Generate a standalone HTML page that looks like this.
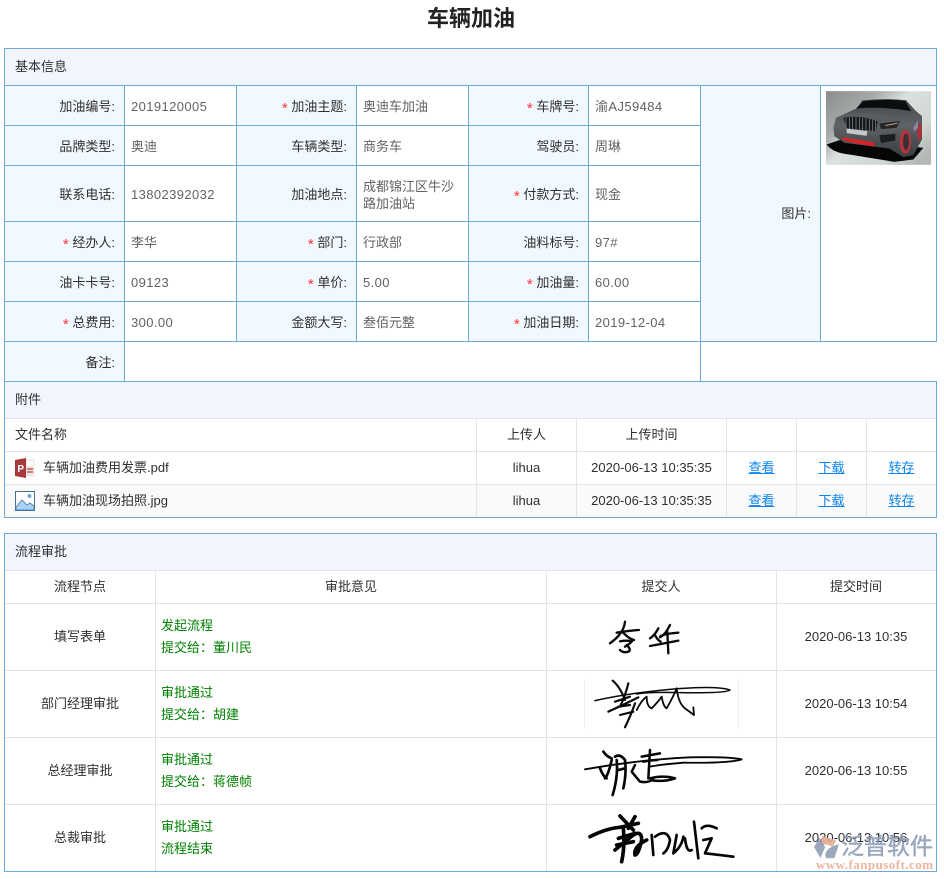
<!DOCTYPE html>
<html lang="zh"><head><meta charset="utf-8"><title>车辆加油</title>
<style>
html,body{margin:0;padding:0;background:#fff}
body{width:944px;height:879px;position:relative;overflow:hidden;font:13px/20px "Liberation Sans","Noto Sans CJK SC",sans-serif;color:#2f2f2f}
.b,.g,.f{position:absolute}
.b{background:#6ea9e0}.g{background:#e4e4e4}
.t{position:absolute;white-space:nowrap;height:20px;line-height:20px;margin-top:1px}
.l{right:829px}.l2{right:597px}.l3{right:365px}.l4{right:133px}
.v{color:#606266;letter-spacing:.4px}
.r{color:#f33;font-size:15px;position:relative;top:2px}
.c{transform:translateX(-50%)}
.gr{color:#008000;left:161px}
a{color:#0a84f0;text-decoration:underline}
svg{position:absolute;overflow:visible}
</style></head><body>
<div class="t" style="left:427px;top:4px;height:28px;line-height:28px;font-size:22px;font-weight:700;color:#222">车辆加油</div>

<!-- basic info fills -->
<div class="f" style="left:5px;top:49px;width:931px;height:36px;background:#f1f6fe"></div>
<div class="f" style="left:5px;top:86px;width:119px;height:295px;background:#f2f8ff"></div>
<div class="f" style="left:237px;top:86px;width:119px;height:255px;background:#f2f8ff"></div>
<div class="f" style="left:469px;top:86px;width:119px;height:255px;background:#f2f8ff"></div>
<div class="f" style="left:701px;top:86px;width:119px;height:255px;background:#f2f8ff"></div>
<!-- basic lines -->
<div class="b" style="left:4px;top:48px;width:933px;height:1px"></div>
<div class="b" style="left:4px;top:85px;width:933px;height:1px"></div>
<div class="b" style="left:4px;top:125px;width:697px;height:1px"></div>
<div class="b" style="left:4px;top:165px;width:697px;height:1px"></div>
<div class="b" style="left:4px;top:221px;width:697px;height:1px"></div>
<div class="b" style="left:4px;top:261px;width:697px;height:1px"></div>
<div class="b" style="left:4px;top:301px;width:697px;height:1px"></div>
<div class="b" style="left:4px;top:341px;width:933px;height:1px"></div>
<div class="b" style="left:4px;top:381px;width:933px;height:1px"></div>
<div class="b" style="left:4px;top:48px;width:1px;height:470px"></div>
<div class="b" style="left:936px;top:48px;width:1px;height:294px"></div>
<div class="b" style="left:936px;top:381px;width:1px;height:137px"></div>
<div class="b" style="left:124px;top:85px;width:1px;height:296px"></div>
<div class="b" style="left:236px;top:85px;width:1px;height:257px"></div>
<div class="b" style="left:356px;top:85px;width:1px;height:257px"></div>
<div class="b" style="left:468px;top:85px;width:1px;height:257px"></div>
<div class="b" style="left:588px;top:85px;width:1px;height:257px"></div>
<div class="b" style="left:700px;top:85px;width:1px;height:296px"></div>
<div class="b" style="left:820px;top:85px;width:1px;height:257px"></div>

<div class="t" style="left:15px;top:56px">基本信息</div>

<div class="t l" style="top:96px">加油编号:</div><div class="t v" style="left:131px;top:96px">2019120005</div>
<div class="t l2" style="top:96px"><span class="r">*</span> 加油主题:</div><div class="t v" style="left:363px;top:96px;letter-spacing:0">奥迪车加油</div>
<div class="t l3" style="top:96px"><span class="r">*</span> 车牌号:</div><div class="t v" style="left:595px;top:96px">渝AJ59484</div>
<div class="t l" style="top:136px">品牌类型:</div><div class="t v" style="left:131px;top:136px;letter-spacing:0">奥迪</div>
<div class="t l2" style="top:136px">车辆类型:</div><div class="t v" style="left:363px;top:136px;letter-spacing:0">商务车</div>
<div class="t l3" style="top:136px">驾驶员:</div><div class="t v" style="left:595px;top:136px;letter-spacing:0">周琳</div>
<div class="t l" style="top:184px">联系电话:</div><div class="t v" style="left:131px;top:184px">13802392032</div>
<div class="t l2" style="top:184px">加油地点:</div>
<div class="t v" style="left:363px;top:176px;letter-spacing:0">成都锦江区牛沙</div><div class="t v" style="left:363px;top:193px;letter-spacing:0">路加油站</div>
<div class="t l3" style="top:184px"><span class="r">*</span> 付款方式:</div><div class="t v" style="left:595px;top:184px;letter-spacing:0">现金</div>
<div class="t l" style="top:232px"><span class="r">*</span> 经办人:</div><div class="t v" style="left:131px;top:232px;letter-spacing:0">李华</div>
<div class="t l2" style="top:232px"><span class="r">*</span> 部门:</div><div class="t v" style="left:363px;top:232px;letter-spacing:0">行政部</div>
<div class="t l3" style="top:232px">油料标号:</div><div class="t v" style="left:595px;top:232px">97#</div>
<div class="t l" style="top:272px">油卡卡号:</div><div class="t v" style="left:131px;top:272px">09123</div>
<div class="t l2" style="top:272px"><span class="r">*</span> 单价:</div><div class="t v" style="left:363px;top:272px">5.00</div>
<div class="t l3" style="top:272px"><span class="r">*</span> 加油量:</div><div class="t v" style="left:595px;top:272px">60.00</div>
<div class="t l" style="top:312px"><span class="r">*</span> 总费用:</div><div class="t v" style="left:131px;top:312px">300.00</div>
<div class="t l2" style="top:312px">金额大写:</div><div class="t v" style="left:363px;top:312px;letter-spacing:0">叁佰元整</div>
<div class="t l3" style="top:312px"><span class="r">*</span> 加油日期:</div><div class="t v" style="left:595px;top:312px">2019-12-04</div>
<div class="t l" style="top:352px">备注:</div>
<div class="t l4" style="top:203px">图片:</div>

<!-- car -->
<svg style="left:826px;top:91px" width="105" height="74" viewBox="0 0 315 221">
<defs>
<linearGradient id="bg" x1="0" y1="0" x2="1" y2=".8"><stop offset="0" stop-color="#8a8d8c"/><stop offset=".3" stop-color="#a5a9a7"/><stop offset=".5" stop-color="#dbe2de"/><stop offset=".8" stop-color="#d0d6d2"/><stop offset="1" stop-color="#b4b9b6"/></linearGradient>
<linearGradient id="bd" x1="0" y1="0" x2="0" y2="1"><stop offset="0" stop-color="#43474b"/><stop offset=".45" stop-color="#5e6368"/><stop offset="1" stop-color="#3a3d41"/></linearGradient>
</defs>
<rect width="315" height="221" fill="url(#bg)"/>
<path d="M2 160Q20 185 70 190L205 212L262 205L292 170L60 140Z" fill="#060606"/>
<path d="M22 110L30 80L95 50L108 28Q170 20 240 27L268 58L288 75V145L262 192L232 198L190 172L55 155L25 135Z" fill="url(#bd)"/>
<path d="M90 52L112 30Q175 22 238 30L255 60Q170 45 90 52Z" fill="#0c0d0f"/>
<path d="M40 75Q100 58 160 70L240 85L158 92Q100 72 50 85Z" fill="#585d62"/>
<path d="M52 80Q100 70 155 90L150 120L62 112Z" fill="#17181b"/>
<path d="M60 80V112M70 78V113M80 77V114M90 77V115M100 78V116M110 80V117M120 81V118M130 83V119M140 85V120M149 87V120" stroke="#8a8f93" stroke-width="2"/>
<path d="M62 112L124 120L122 134L62 126Z" fill="#c4c7c9"/>
<path d="M47 138Q100 145 148 155L142 166Q90 158 52 148Z" fill="#d3262a"/>
<path d="M160 97L222 90L212 110L165 114Z" fill="#232528"/>
<path d="M178 103L215 96" stroke="#c99e6c" stroke-width="3"/>
<path d="M160 132L208 128V148L165 156Z" fill="#1b1d20"/>
<ellipse cx="238" cy="152" rx="17" ry="36" fill="#b5333c"/>
<ellipse cx="240" cy="152" rx="9" ry="25" fill="#3a3034"/>
<ellipse cx="280" cy="122" rx="7" ry="26" fill="#a93039"/>
<path d="M262 108L276 88V110L264 122Z" fill="#8b85a8"/>
</svg>

<!-- attachments -->
<div class="f" style="left:5px;top:382px;width:931px;height:36px;background:#f1f6fe"></div>
<div class="f" style="left:5px;top:485px;width:931px;height:32px;background:#fafafa"></div>
<div class="g" style="left:5px;top:418px;width:931px;height:1px"></div>
<div class="g" style="left:5px;top:451px;width:931px;height:1px"></div>
<div class="g" style="left:5px;top:484px;width:931px;height:1px"></div>
<div class="g" style="left:476px;top:419px;width:1px;height:98px"></div>
<div class="g" style="left:576px;top:419px;width:1px;height:98px"></div>
<div class="g" style="left:726px;top:419px;width:1px;height:98px"></div>
<div class="g" style="left:796px;top:419px;width:1px;height:98px"></div>
<div class="g" style="left:866px;top:419px;width:1px;height:98px"></div>
<div class="b" style="left:4px;top:517px;width:933px;height:1px"></div>

<div class="t" style="left:15px;top:389px">附件</div>
<div class="t" style="left:15px;top:424px">文件名称</div>
<div class="t c" style="left:526.5px;top:424px">上传人</div>
<div class="t c" style="left:651.5px;top:424px">上传时间</div>
<svg style="left:15px;top:458px" width="20" height="20" viewBox="0 0 20 20">
<path d="M7 1.5H19.5V18.5H7Z" fill="#f1e4e4"/><path d="M12 3H18V8H12Z" fill="#fff"/><path d="M12 10H18V12H12ZM12 13H18V15H12Z" fill="#c8807f"/>
<path d="M0 2L11 0V20L0 18Z" fill="#a8383b"/>
<text x="2.4" y="14" font-family="Liberation Sans" font-size="10" font-weight="700" fill="#fff">P</text>
</svg>
<div class="t" style="left:43px;top:457px">车辆加油费用发票.pdf</div>
<div class="t c" style="left:526.5px;top:457px">lihua</div>
<div class="t c" style="left:651.5px;top:457px">2020-06-13 10:35:35</div>
<div class="t c" style="left:761.5px;top:457px"><a>查看</a></div>
<div class="t c" style="left:831.5px;top:457px"><a>下载</a></div>
<div class="t c" style="left:901.5px;top:457px"><a>转存</a></div>
<svg style="left:15px;top:491px" width="20" height="20" viewBox="0 0 20 20">
<rect x=".5" y=".5" width="19" height="19" fill="#fff" stroke="#47729f"/>
<path d="M1 16L7 9L12 14L15 12L19 15V19H1Z" fill="#a7d3f8" stroke="#47729f" stroke-width=".8"/>
<circle cx="14.5" cy="5" r="2" fill="#7fa8cf"/>
</svg>
<div class="t" style="left:43px;top:490px">车辆加油现场拍照.jpg</div>
<div class="t c" style="left:526.5px;top:490px">lihua</div>
<div class="t c" style="left:651.5px;top:490px">2020-06-13 10:35:35</div>
<div class="t c" style="left:761.5px;top:490px"><a>查看</a></div>
<div class="t c" style="left:831.5px;top:490px"><a>下载</a></div>
<div class="t c" style="left:901.5px;top:490px"><a>转存</a></div>

<!-- flow -->
<div class="f" style="left:5px;top:534px;width:931px;height:36px;background:#f1f6fe"></div>
<div class="b" style="left:4px;top:533px;width:933px;height:1px"></div>
<div class="b" style="left:4px;top:871px;width:933px;height:1px"></div>
<div class="b" style="left:4px;top:533px;width:1px;height:339px"></div>
<div class="b" style="left:936px;top:533px;width:1px;height:339px"></div>
<div class="g" style="left:5px;top:570px;width:931px;height:1px"></div>
<div class="g" style="left:5px;top:603px;width:931px;height:1px"></div>
<div class="g" style="left:5px;top:670px;width:931px;height:1px"></div>
<div class="g" style="left:5px;top:737px;width:931px;height:1px"></div>
<div class="g" style="left:5px;top:804px;width:931px;height:1px"></div>
<div class="g" style="left:155px;top:571px;width:1px;height:300px"></div>
<div class="g" style="left:546px;top:571px;width:1px;height:300px"></div>
<div class="g" style="left:776px;top:571px;width:1px;height:300px"></div>

<div class="t" style="left:15px;top:541px">流程审批</div>
<div class="t c" style="left:80px;top:576px">流程节点</div>
<div class="t c" style="left:351px;top:576px">审批意见</div>
<div class="t c" style="left:661px;top:576px">提交人</div>
<div class="t c" style="left:856px;top:576px">提交时间</div>

<div class="t c" style="left:80px;top:626px">填写表单</div>
<div class="t gr" style="top:615px">发起流程</div><div class="t gr" style="top:637px">提交给：董川民</div>
<div class="t c" style="left:856px;top:626px">2020-06-13 10:35</div>
<div class="t c" style="left:80px;top:693px">部门经理审批</div>
<div class="t gr" style="top:682px">审批通过</div><div class="t gr" style="top:704px">提交给：胡建</div>
<div class="t c" style="left:856px;top:693px">2020-06-13 10:54</div>
<div class="t c" style="left:80px;top:760px">总经理审批</div>
<div class="t gr" style="top:749px">审批通过</div><div class="t gr" style="top:771px">提交给：蒋德帧</div>
<div class="t c" style="left:856px;top:760px">2020-06-13 10:55</div>
<div class="t c" style="left:80px;top:827px">总裁审批</div>
<div class="t gr" style="top:816px">审批通过</div><div class="t gr" style="top:838px">流程结束</div>
<div class="t c" style="left:856px;top:827px">2020-06-13 10:56</div>

<div class="g" style="left:584px;top:679px;width:1px;height:50px;background:#eee"></div>
<div class="g" style="left:738px;top:679px;width:1px;height:50px;background:#eee"></div>

<svg style="left:570px;top:600px" width="190" height="140" viewBox="0 0 570 420" fill="none" stroke="#0a0a0a" stroke-width="7" stroke-linecap="round" stroke-linejoin="round">
<path d="M140 98Q175 92 207 90M165 65Q162 100 120 130M160 98Q175 115 192 120M150 124Q170 120 186 124Q175 135 165 140M170 135Q186 150 175 155Q160 160 150 150"/>
<path d="M265 85Q255 105 240 115M255 105Q262 120 272 125M300 75Q285 105 270 112M272 108Q290 100 325 98M240 138Q285 130 325 122M292 95L295 160"/>
<path stroke-width="4.5" d="M75 302Q170 280 300 268Q440 256 480 270Q470 280 330 278Q240 275 200 282"/>
<path stroke-width="6.5" d="M128 242Q150 260 165 300M175 250Q165 290 150 320M115 335Q170 310 205 292M165 382Q185 340 195 310M150 345L190 335M145 320L180 315M135 305L180 290"/>
<path stroke-width="5.5" d="M200 330Q215 300 230 290Q230 320 245 325Q265 305 275 290Q280 320 290 325Q310 290 320 265Q325 310 345 325L372 345L370 322"/>
</svg>
<svg style="left:570px;top:740px" width="374" height="139" viewBox="0 0 1122 417" fill="none" stroke="#050505" stroke-linecap="round" stroke-linejoin="round">
<path stroke-width="5.5" d="M45 88Q200 60 360 52Q480 50 515 58Q480 70 340 68Q260 75 240 80"/>
<path stroke-width="8" d="M100 35Q110 50 125 55M90 85Q100 110 110 115M125 60Q115 105 105 115M135 50Q150 40 165 60Q170 100 160 145M140 60Q145 110 128 165M145 90L165 85"/>
<path stroke-width="7.5" d="M240 30L235 115M215 50L270 40M220 65Q250 60 262 60M195 75L185 95L210 125Q240 130 250 115M240 115Q280 105 315 115Q290 125 250 122"/>
<path stroke-width="11" d="M60 290Q110 265 150 262L205 250M150 228L190 270M195 230L175 265M160 265Q165 320 155 365M135 330Q170 300 190 285Q215 270 215 300Q205 345 195 345Q190 320 230 300M145 295L195 280M140 315L190 305"/>
<path stroke-width="8" d="M245 285L250 345M255 290Q290 265 300 300Q295 330 280 340M320 285L310 340Q335 320 340 290M372 245L385 355M345 295Q350 340 365 330M395 265Q410 250 440 265M400 300L425 295L405 340Q450 345 490 350"/>
</svg>

<!-- watermark -->
<svg style="left:813px;top:835px" width="27" height="25" viewBox="0 0 29 27">
<path d="M10 1L25 6L21 13Q14 8 7 12Z" fill="#e6ad92" opacity=".9"/>
<path d="M7 3L1 13L8 25L13 13Z" fill="#8a9ab3" opacity=".85"/>
<path d="M13 21Q15 13 28 10L23 25H14Z" fill="#8a9ab3" opacity=".85"/>
</svg>
<div class="t" style="left:841px;top:831px;height:28px;line-height:28px;font-size:23px;color:#8f9fb8;opacity:.9;-webkit-text-stroke:.5px #8f9fb8">泛普软件</div>
<div class="t" style="left:816px;top:854px;font-family:'Liberation Serif',serif;font-weight:700;font-size:13px;letter-spacing:.45px;color:#ebb5a0">www.fanpusoft.com</div>
</body></html>
